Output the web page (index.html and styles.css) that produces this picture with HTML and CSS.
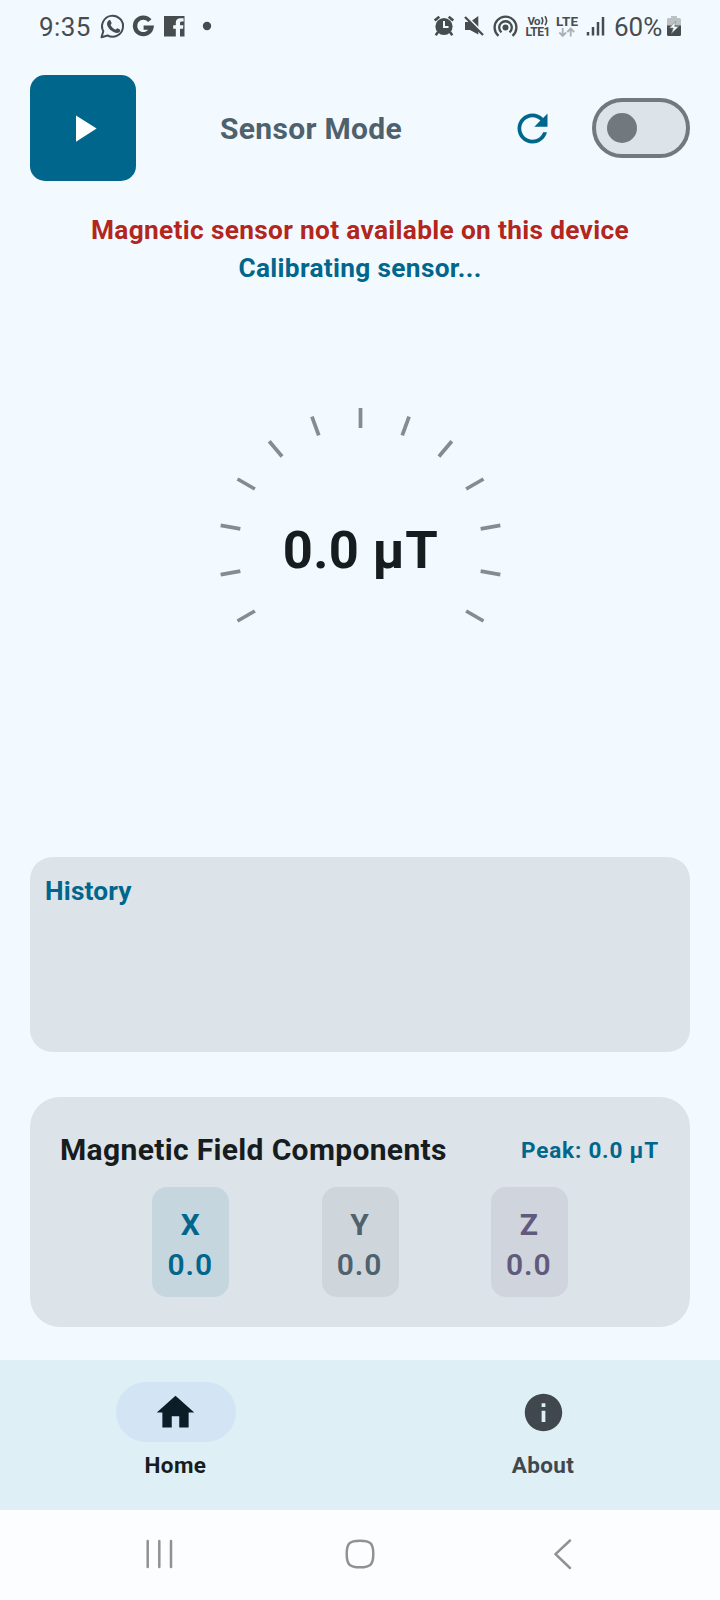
FILE: index.html
```html
<!DOCTYPE html>
<html lang="en">
<head>
<meta charset="utf-8">
<title>Sensor Mode</title>
<link rel="stylesheet" href="styles.css">
</head>
<body>
<div class="status-bar">
  <span class="clock">9:35</span>
  <svg class="notifications" width="120" height="54" viewBox="0 0 120 54">
    <path d="M2.500 37.200 4.300 31.200A10.500 10.500 0 1 1 8.600 35.500Z" fill="none" stroke="#474c4f" stroke-width="2" stroke-linejoin="round"/>
    <path d="M9.600 20.500c.8-.7 1.700-.5 2 .2l1 2.400c.2.700-1.200 1.700-.9 2.200 1.100 2 2.500 3.300 4.500 4.200.8.300 1.500-1.600 2.200-1.300l2.400 1.200c.8.500.3 2.100-.5 2.800-1.500 1.200-3.400.9-5.300.1-3-1.200-5.200-3.500-6.500-6.200-.9-2-.6-4.300 1.100-5.600z" fill="#474c4f"/>
    <path d="M50.800 20.700A8.300 8.300 0 1 0 52.400 27.700H44.600" fill="none" stroke="#474c4f" stroke-width="4.300"/>
    <path d="M65 16h20.500v20.500H81v-7.700h3l.4-3.500H81v-2c0-1.200.4-1.800 1.800-1.800h1.800v-3.200h-2.900c-3.400 0-4.900 1.700-4.900 4.500v2.500h-2.600v3.500h2.600v7.700H65z" fill="#474c4f"/>
    <circle cx="108" cy="26" r="4.200" fill="#474c4f"/>
  </svg>
  <svg class="indicators" width="180" height="54" viewBox="0 0 180 54">
    <g fill="none" stroke="#474c4f">
      <circle cx="14" cy="26.500" r="8.600" fill="#474c4f" stroke="none"/>
      <path d="m4.700 20.600 4.600-3.900M23.300 20.600l-4.600-3.900" stroke-width="2.600"/>
      <path d="m8 32-2.300 3.300M20 32l2.300 3.300" stroke-width="2.500"/>
      <path d="M14 21v6h4.500" stroke="#f3faff" stroke-width="2"/>
      <path d="M35 22h5l8.300-6v18.500L40 30h-5z" fill="#474c4f" stroke="none"/>
      <path d="m36.500 16.500 19 19" stroke="#f3faff" stroke-width="2.400"/>
      <path d="m35 17 18 18" stroke-width="2.300"/>
    </g>
    <g transform="translate(75.500 27.500)" fill="none" stroke="#474c4f" stroke-width="2.300">
      <circle r="3" fill="#474c4f" stroke="none"/>
      <path d="M-4 4.900A6.300 6.300 0 1 1 4 4.900M-7 8.400A10.900 10.900 0 1 1 7 8.400"/>
    </g>
    <g class="badge-text">
      <text x="97.500" y="24.500" font-size="11.500" textLength="13">Vo</text>
      <text x="95.500" y="36" font-size="12" textLength="25">LTE1</text>
      <text x="126" y="25.500" font-size="13.500" textLength="22">LTE</text>
    </g>
    <path d="M111.500 17.200q2.400 3.600 0 7.200M115 16.300q3.200 4.600 0 9" fill="none" stroke="#474c4f" stroke-width="1.600"/>
    <path d="M132.700 28v8M129.300 32.500l3.400 3.500 3.400-3.500M140.700 36.500V29M137.300 32l3.400-3.500 3.400 3.500" fill="none" stroke="#aab0b4" stroke-width="1.800"/>
    <path d="M158 32v3.500M163 27v8.500M168 22v13.500M173 17v18.500" fill="none" stroke="#474c4f" stroke-width="2.500"/>
  </svg>
  <span class="battery-level">60%</span>
  <svg class="battery" width="15" height="54" viewBox="0 0 15 54">
    <path d="M4 16h6v2h2.500q1.500 0 1.500 1.500V26H0v-6.500Q0 18 1.500 18H4z" fill="#bcc1c4"/>
    <path d="M0 25.500h14v9q0 1.500-1.500 1.500h-11Q0 36 0 34.500z" fill="#474c4f"/>
    <path d="M8.500 21.500 2.500 28H6.300L4.500 33.500 11.700 26.500H7.700z" fill="#f3faff" stroke="#777d80" stroke-width=".6"/>
  </svg>
</div>

<main class="screen">
  <header class="toolbar">
    <button class="play" aria-label="Start">
      <svg width="45" height="45" viewBox="0 0 24 24"><path d="M8 5v14l11-7z" fill="#fff"/></svg>
    </button>
    <h1 class="mode">Sensor Mode</h1>
    <svg class="refresh" width="45" height="45" viewBox="0 0 24 24"><path fill="#00668b" d="M17.650 6.350C16.200 4.900 14.210 4 12 4c-4.420 0-7.990 3.580-7.990 8s3.570 8 7.990 8c3.730 0 6.840-2.550 7.730-6h-2.080c-.82 2.330-3.040 4-5.650 4-3.310 0-6-2.690-6-6s2.690-6 6-6c1.660 0 3.140.69 4.220 1.780L13 11h7V4l-2.350 2.350z"/></svg>
    <div class="switch"><span class="thumb"></span></div>
  </header>

  <section class="messages">
    <p class="error">Magnetic sensor not available on this device</p>
    <p class="progress">Calibrating sensor...</p>
  </section>

  <section class="gauge">
    <svg width="320" height="320" viewBox="-160.500 -160 320 320">
      <defs><path id="tick" d="M0-142V-122"/></defs>
      <g stroke="#858b8e" stroke-width="3.750">
        <use href="#tick" transform="rotate(-120)"/>
        <use href="#tick" transform="rotate(-100)"/>
        <use href="#tick" transform="rotate(-80)"/>
        <use href="#tick" transform="rotate(-60)"/>
        <use href="#tick" transform="rotate(-40)"/>
        <use href="#tick" transform="rotate(-20)"/>
        <use href="#tick"/>
        <use href="#tick" transform="rotate(20)"/>
        <use href="#tick" transform="rotate(40)"/>
        <use href="#tick" transform="rotate(60)"/>
        <use href="#tick" transform="rotate(80)"/>
        <use href="#tick" transform="rotate(100)"/>
        <use href="#tick" transform="rotate(120)"/>
      </g>
    </svg>
    <span class="reading">0.0 µT</span>
  </section>

  <section class="history"><h2>History</h2></section>

  <section class="components">
    <div class="components-head">
      <h2>Magnetic Field Components</h2>
      <span class="peak">Peak: 0.0 µT</span>
    </div>
    <div class="axes">
      <div class="axis axis-x"><b>X</b><span>0.0</span></div>
      <div class="axis axis-y"><b>Y</b><span>0.0</span></div>
      <div class="axis axis-z"><b>Z</b><span>0.0</span></div>
    </div>
  </section>
</main>

<nav class="tabs">
  <a class="tab active">
    <span class="pill"><svg width="45" height="45" viewBox="0 0 24 24"><path fill="#0a1e28" d="M10 20v-6h4v6h5v-8h3L12 3 2 12h3v8z"/></svg></span>
    <span class="label">Home</span>
  </a>
  <a class="tab">
    <span class="pill"><svg width="45" height="45" viewBox="0 0 24 24"><path fill="#41484d" d="M12 2C6.480 2 2 6.480 2 12s4.480 10 10 10 10-4.480 10-10S17.520 2 12 2zm1 15h-2v-6h2v6zm0-8h-2V7h2v2z"/></svg></span>
    <span class="label">About</span>
  </a>
</nav>

<footer class="system-nav">
  <svg class="recents" width="30" height="32" viewBox="0 0 30 32"><path d="M3.700 3v26M15.300 3v26M27 3v26"/></svg>
  <svg class="home" width="32" height="32" viewBox="0 0 32 32"><path d="M16 2.700C26.500 2.700 29.300 5.500 29.300 16S26.500 29.300 16 29.300 2.700 26.500 2.700 16 5.500 2.700 16 2.700z"/></svg>
  <svg class="back" width="20" height="32" viewBox="0 0 20 32"><path d="M17 2.500 2.500 16.200 17 30"/></svg>
</footer>
</body>
</html>
```

FILE: styles.css
```css
* { box-sizing: border-box; }

body {
  margin: 0;
  width: 720px;
  height: 1600px;
  display: flex;
  flex-direction: column;
  overflow: hidden;
  background: #f3faff;
  color: #171c1f;
  font-family: Roboto, "Liberation Sans", sans-serif;
}

h1, h2, p { margin: 0; }
svg { display: block; flex: none; }

.status-bar {
  height: 54px;
  display: flex;
  padding: 0 38px 0 39px;
  color: #474c4f;
  font-size: 26px;
  line-height: 54px;
}
.clock { width: 60px; letter-spacing: 0.4px; }
.indicators { margin-left: 211px; margin-right: 4px; }
.battery-level { width: 53px; letter-spacing: 0; }
.badge-text { fill: #474c4f; font-weight: 700; }

.screen {
  height: 1306px;
  padding: 21px 30px 33px;
  display: flex;
  flex-direction: column;
}

.toolbar { height: 106px; display: flex; align-items: center; flex: none; }
.play {
  width: 106px;
  height: 106px;
  border: 0;
  border-radius: 15px;
  padding: 0;
  background: #00668b;
  display: flex;
  align-items: center;
  justify-content: center;
}
.mode {
  flex: 1;
  padding-right: 24px;
  text-align: center;
  color: #4e616d;
  font-size: 30px;
  line-height: 45px;
  font-weight: 700;
  letter-spacing: 0.3px;
}
.refresh { margin-right: 37px; }
.switch {
  width: 98px;
  height: 60px;
  border: 4px solid #71787e;
  border-radius: 30px;
  background: #dce3e9;
  display: flex;
  align-items: center;
  padding-left: 11px;
}
.thumb { width: 30px; height: 30px; border-radius: 50%; background: #71787e; }

.messages {
  padding-top: 30px;
  text-align: center;
  font-size: 26.25px;
  line-height: 38px;
  font-weight: 700;
  letter-spacing: 0.33px;
}
.error { color: #b3261e; }
.progress { color: #00668b; }

.gauge {
  flex: 1;
  display: grid;
  place-items: center;
  padding-bottom: 45px;
}
.gauge > * { grid-area: 1 / 1; }
.reading { padding-left: 1px; font-size: 52.5px; line-height: 60px; font-weight: 700; letter-spacing: 0.3px; }

.history {
  height: 195px;
  flex: none;
  border-radius: 22.5px;
  background: #dce3e9;
  padding: 16px 15px;
}
.history h2 {
  color: #00668b;
  font-size: 26.25px;
  line-height: 37.5px;
  font-weight: 700;
  letter-spacing: 0.2px;
}

.components {
  height: 230px;
  flex: none;
  margin-top: 45px;
  border-radius: 30px;
  background: #dce3e9;
  padding: 30px;
}
.components-head {
  height: 45px;
  display: flex;
  align-items: center;
  justify-content: space-between;
}
.components h2 { font-size: 30px; line-height: 45px; font-weight: 700; letter-spacing: 0.34px; }
.peak { color: #00668b; font-size: 22.5px; line-height: 30px; font-weight: 700; letter-spacing: 0.8px; padding-right: 1px; }

.axes { margin-top: 15px; display: flex; justify-content: space-evenly; }
.axis {
  width: 77px;
  height: 110px;
  padding: 15px 1px 15px 0;
  border-radius: 15px;
  display: flex;
  flex-direction: column;
  align-items: center;
  font-size: 30px;
}
.axis b { line-height: 45px; font-weight: 700; }
.axis span { line-height: 35px; font-weight: 600; letter-spacing: 0.9px; }
.axis-x { background: #c6d6de; color: #00668b; }
.axis-y { background: #ced5db; color: #4e616d; }
.axis-z { background: #d0d4dd; color: #605a7d; }

.tabs { height: 150px; display: flex; gap: 15px; background: #deeff5; }
.tab {
  flex: 1;
  padding-top: 22px;
  padding-right: 1.5px;
  display: flex;
  flex-direction: column;
  align-items: center;
  color: #41484d;
}
.pill {
  width: 120px;
  height: 60px;
  border-radius: 30px;
  display: flex;
  align-items: center;
  justify-content: center;
}
.active { color: #171c1f; }
.active .pill { background: #d3e5f5; }
.label { margin-top: 8px; font-size: 22.5px; line-height: 30px; font-weight: 700; letter-spacing: 0.4px; }

.system-nav {
  height: 90px;
  display: flex;
  align-items: center;
  padding: 0 0 2px 144px;
  background: #fcfdff;
}
.home { margin-left: 170px; }
.back { margin-left: 177px; }
.system-nav path { fill: none; stroke: #8f9193; stroke-width: 2.5; stroke-linecap: round; stroke-linejoin: round; }
```
